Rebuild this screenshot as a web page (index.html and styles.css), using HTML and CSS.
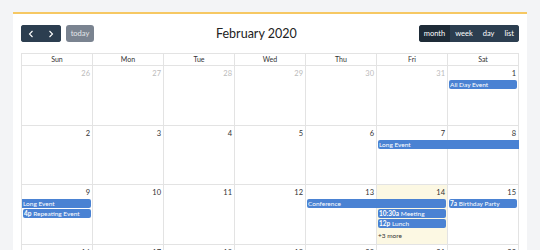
FILE: index.html
```html
<!DOCTYPE html>
<html lang="en">
<head>
    <meta charset="UTF-8">
    <title>Calendar</title>
    <link rel="stylesheet" href="styles.css">
</head>
<body>
    <div class="card">
        <div class="toolbar">
            <div class="left">
                <div class="btn-group">
                    <button class="btn icon-btn"><svg width="6" height="8" viewBox="0 0 6 8"><polyline points="4.5,1 1.5,4 4.5,7" fill="none" stroke="#fff" stroke-width="1.1"/></svg></button>
                    <button class="btn icon-btn"><svg width="6" height="8" viewBox="0 0 6 8"><polyline points="1.5,1 4.5,4 1.5,7" fill="none" stroke="#fff" stroke-width="1.1"/></svg></button>
                </div>
                <button class="btn today">today</button>
            </div>
            <h2 class="title">February 2020</h2>
            <div class="right">
                <div class="btn-group">
                    <button class="btn view active">month</button>
                    <button class="btn view">week</button>
                    <button class="btn view">day</button>
                    <button class="btn view">list</button>
                </div>
            </div>
        </div>

        <div class="calendar">
            <div class="head">
                <div>Sun</div><div>Mon</div><div>Tue</div><div>Wed</div><div>Thu</div><div>Fri</div><div>Sat</div>
            </div>

            <div class="week">
                <div class="cell c1"></div><div class="cell c2"></div><div class="cell c3"></div><div class="cell c4"></div><div class="cell c5"></div><div class="cell c6"></div><div class="cell c7"></div>
                <div class="num c1 other">26</div><div class="num c2 other">27</div><div class="num c3 other">28</div><div class="num c4 other">29</div><div class="num c5 other">30</div><div class="num c6 other">31</div><div class="num c7">1</div>
                <div class="event r1 c7">All Day Event</div>
            </div>

            <div class="week">
                <div class="cell c1"></div><div class="cell c2"></div><div class="cell c3"></div><div class="cell c4"></div><div class="cell c5"></div><div class="cell c6"></div><div class="cell c7"></div>
                <div class="num c1">2</div><div class="num c2">3</div><div class="num c3">4</div><div class="num c4">5</div><div class="num c5">6</div><div class="num c6">7</div><div class="num c7">8</div>
                <div class="event r1 span-6-7 cont-right">Long Event</div>
            </div>

            <div class="week">
                <div class="cell c1"></div><div class="cell c2"></div><div class="cell c3"></div><div class="cell c4"></div><div class="cell c5"></div><div class="cell c6 today-cell"></div><div class="cell c7"></div>
                <div class="num c1">9</div><div class="num c2">10</div><div class="num c3">11</div><div class="num c4">12</div><div class="num c5">13</div><div class="num c6">14</div><div class="num c7">15</div>
                <div class="event r1 c1 cont-left">Long Event</div>
                <div class="event r2 c1"><b>4p</b> Repeating Event</div>
                <div class="event r1 span-5-6">Conference</div>
                <div class="event r2 c6"><b>10:30a</b> Meeting</div>
                <div class="event r3 c6"><b>12p</b> Lunch</div>
                <div class="more r4 c6">+3 more</div>
                <div class="event r1 c7"><b>7a</b> Birthday Party</div>
            </div>

            <div class="week">
                <div class="cell c1"></div><div class="cell c2"></div><div class="cell c3"></div><div class="cell c4"></div><div class="cell c5"></div><div class="cell c6"></div><div class="cell c7"></div>
                <div class="num c1">16</div><div class="num c2">17</div><div class="num c3">18</div><div class="num c4">19</div><div class="num c5">20</div><div class="num c6">21</div><div class="num c7">22</div>
            </div>
        </div>
    </div>
</body>
</html>
```

FILE: styles.css
```css
body {
    margin: 0;
    background-color: #f3f4f6;
    font-family: Lato, "Noto Sans", sans-serif;
    color: #333;
}
.card {
    margin: 12px 0 0 13px;
    width: 498px;
    padding: 11px 8px 0 8px;
    background-color: white;
    border-top: 2px solid #f6c863;
}
.toolbar {
    display: flex;
    align-items: center;
    justify-content: space-between;
    height: 17px;
}
.left, .right {
    display: flex;
    gap: 5px;
}
.title {
    margin: 0;
    font-size: 12.5px;
    font-weight: 400;
    color: #222;
}
.btn-group {
    display: flex;
    background-color: #2c3e50;
    border-radius: 3px;
    overflow: hidden;
}
.btn {
    border: none;
    padding: 0;
    height: 17px;
    font-family: inherit;
    font-size: 7px;
    color: #fff;
    background-color: #2c3e50;
}
.icon-btn {
    width: 20px;
    display: flex;
    align-items: center;
    justify-content: center;
}
.today {
    width: 28px;
    border-radius: 3px;
    background-color: #7a8390;
    color: #e4e7ea;
    font-size: 7.5px;
}
.view {
    padding: 0 5px;
    font-size: 7.5px;
}
.view.active {
    background-color: #1e2b37;
}
.calendar {
    margin-top: 11px;
    width: 497px;
    border-left: 1px solid #e3e3e3;
    border-top: 1px solid #e3e3e3;
}
.head {
    display: grid;
    grid-template-columns: repeat(7, 1fr);
}
.head div {
    height: 11px;
    line-height: 11px;
    font-size: 7px;
    text-align: center;
    border-right: 1px solid #e3e3e3;
    border-bottom: 1px solid #e3e3e3;
}
.week {
    display: grid;
    grid-template-columns: repeat(7, 1fr);
    grid-template-rows: 14px 10px 10px 10px 1fr;
    height: 59.5px;
}
.cell {
    grid-row: 1 / -1;
    border-right: 1px solid #e3e3e3;
    border-bottom: 1px solid #e3e3e3;
}
.today-cell {
    background-color: #fcf8e3;
}
.num {
    grid-row: 1;
    font-size: 7.5px;
    text-align: right;
    padding: 3px 3px 0 0;
}
.num.other {
    color: #bbb;
}
.c1 { grid-column: 1; }
.c2 { grid-column: 2; }
.c3 { grid-column: 3; }
.c4 { grid-column: 4; }
.c5 { grid-column: 5; }
.c6 { grid-column: 6; }
.c7 { grid-column: 7; }
.span-5-6 { grid-column: 5 / 7; }
.span-6-7 { grid-column: 6 / 8; }
.r1 { grid-row: 2; }
.r2 { grid-row: 3; }
.r3 { grid-row: 4; }
.r4 { grid-row: 5; }
.event {
    height: 9px;
    line-height: 9px;
    margin: 0 2px 0 1px;
    padding-left: 1px;
    font-size: 6.5px;
    color: #fff;
    background-color: #4a82d3;
    border-radius: 2px;
    white-space: nowrap;
    overflow: hidden;
}
.event b {
    font-weight: 700;
}
.cont-right {
    margin-right: 0;
    border-radius: 2px 0 0 2px;
}
.cont-left {
    margin-left: 0;
    border-radius: 0 2px 2px 0;
}
.more {
    font-size: 6.5px;
    padding: 3px 0 0 1px;
}
```
